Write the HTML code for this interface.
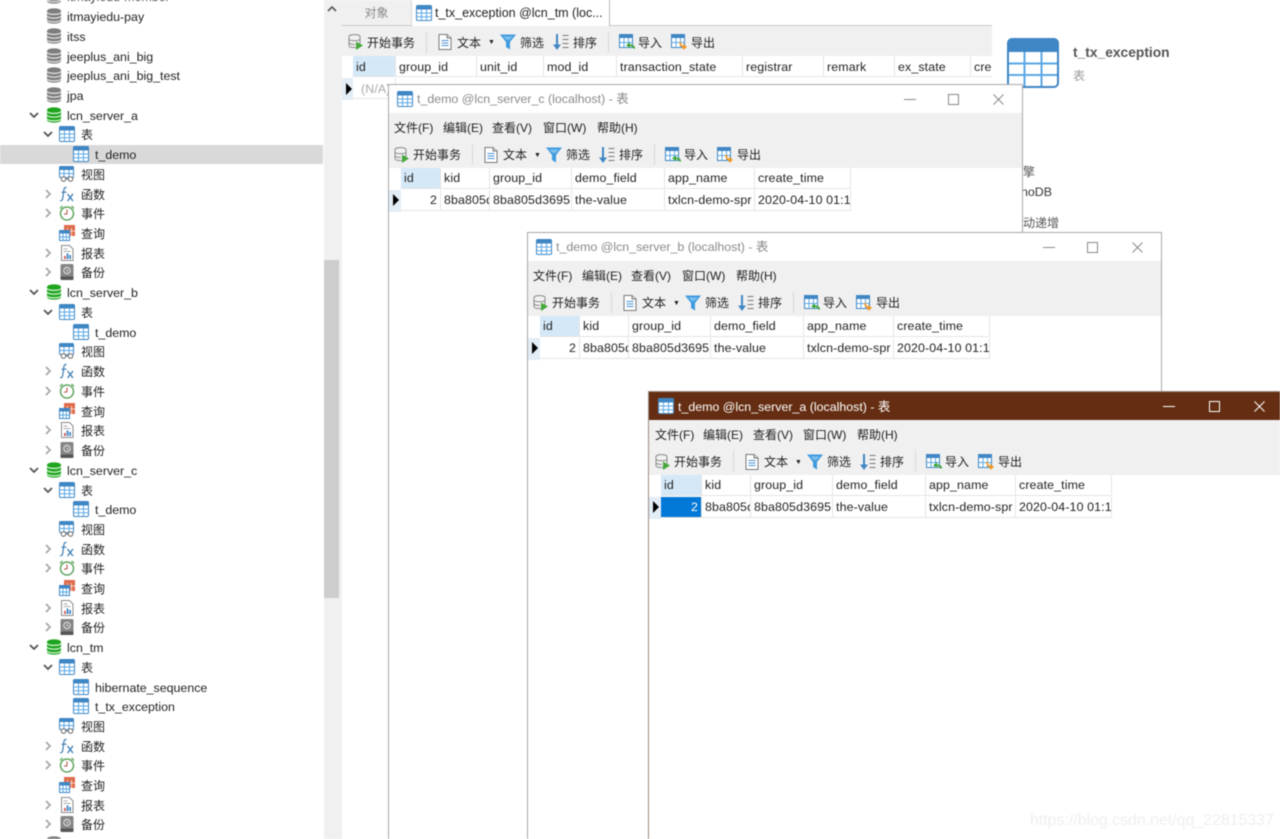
<!DOCTYPE html>
<html lang="zh"><head><meta charset="utf-8"><title>Navicat</title>
<style>
html,body{margin:0;padding:0;background:#fff}
body{width:1280px;height:839px;overflow:hidden;position:relative;font:12.4px/20px "Liberation Sans","Noto Sans CJK SC",sans-serif;color:#222}
#all{position:absolute;left:0;top:0;width:1280px;height:839px;overflow:hidden;filter:blur(.4px)}
svg{position:absolute;overflow:visible}
.a{position:absolute;white-space:nowrap}
.r{position:absolute;left:0;width:323px;height:20px}
.r span{position:absolute;top:1px;white-space:nowrap}
.r svg.i{width:16px;height:16px;top:2px}
.r svg.c{width:10px;height:10px;top:5px}
.l0 svg.i{left:46px}.l0 span{left:67px}.l0 svg.c{left:29px}
.l1 svg.i{left:59px}.l1 span{left:81px;font-size:12px}.l1 svg.c{left:43px}
.l2 svg.i{left:73px}.l2 span{left:95px}
.w{position:absolute;background:#fff;border:1px solid #a8a8a8;box-sizing:border-box;overflow:hidden}
.tt{position:absolute;left:0;right:0;top:0;height:28px;background:#fff;color:#8a8a8a}
.mn{position:absolute;left:0;right:0;top:28px;height:28px;background:#f0f0f0}
.tb{position:absolute;height:27px;background:#f0f0f0;color:#222}
.tb span{position:absolute;top:4px;white-space:nowrap;font-size:12px}
.tb svg{width:16px;height:16px;top:6px}
.tb i{position:absolute;top:3px;width:1px;height:21px;background:#d8d8d8}
.mn span{position:absolute;top:5px;white-space:nowrap;font-size:12px}
.g{position:absolute;left:0;height:44px;letter-spacing:.12px}
.g b{position:absolute;font-weight:400;height:21px;line-height:21px;box-sizing:border-box;padding-left:3px;background:#fff;border-right:1px solid #e4e4e4;border-bottom:1px solid #e4e4e4;overflow:hidden;white-space:nowrap}
#tg b{line-height:23px}
.g b.h{top:0}.g b.d{top:22px}
.g b.gu{background:#e3edf6;border:0;padding:0}
.tt span{position:absolute;top:4px;left:28px;white-space:nowrap}
</style></head><body><div id="all">
<svg width="0" height="0" style="position:absolute"><defs>
<symbol id="tbl" viewBox="0 0 16 16"><rect x=".5" y=".5" width="15" height="15" rx="1.2" fill="#fff" stroke="#3f86c4"/><rect x=".5" y=".5" width="15" height="4" fill="#3f86c4"/><path d="M5.5 4.5v11M10.5 4.5v11M.5 8h15M.5 11.700h15" stroke="#5aa8e6" fill="none"/></symbol>
<symbol id="gdb" viewBox="0 0 16 16"><path d="M1 3c0-3.500 14-3.500 14 0v10c0 3.500-14 3.500-14 0z" fill="#7d7d7d"/><path d="M1 4.500c2 2.500 12 2.500 14 0M1 8.300c2 2.500 12 2.500 14 0M1 12c2 2.500 12 2.500 14 0" stroke="#e4e4e4" stroke-width="1.200" fill="none"/></symbol>
<symbol id="ydb" viewBox="0 0 16 16"><path d="M1 3c0-3.500 14-3.500 14 0v10c0 3.500-14 3.500-14 0z" fill="#1ea51e"/><path d="M1 4.500c2 2.500 12 2.500 14 0M1 8.300c2 2.500 12 2.500 14 0M1 12c2 2.500 12 2.500 14 0" stroke="#d8f2d8" stroke-width="1.200" fill="none"/></symbol>
<symbol id="cd" viewBox="0 0 10 10"><path d="M1 3l4 4 4-4" fill="none" stroke="#555" stroke-width="1.800"/></symbol>
<symbol id="cr" viewBox="0 0 10 10"><path d="M3 1l4 4-4 4" fill="none" stroke="#a6a6a6" stroke-width="1.700"/></symbol>
<symbol id="view" viewBox="0 0 16 16"><rect x=".5" y=".5" width="14" height="11" rx="1" fill="#fff" stroke="#3f86c4"/><rect x=".5" y=".5" width="14" height="3.500" fill="#3f86c4"/><path d="M5 4v7M10 4v7M.5 7.500h14" stroke="#5aa8e6" fill="none"/><circle cx="4.500" cy="13" r="2.300" fill="#fff" stroke="#666"/><circle cx="11.500" cy="13" r="2.300" fill="#fff" stroke="#666"/><path d="M6.800 13h2.400" stroke="#666"/></symbol>
<symbol id="fx" viewBox="0 0 16 16"><path d="M7.500 1.500C5.500 1 5 2.500 4.700 5L3.800 12c-.3 2-1 3-2.800 2.600M2.500 6.200h5" fill="none" stroke="#3f7fb5" stroke-width="1.200"/><path d="M8.500 8l5.500 7M14 8l-5.500 7" stroke="#3f7fb5" stroke-width="1.400"/></symbol>
<symbol id="clk" viewBox="0 0 16 16"><circle cx="8" cy="8.500" r="6.500" fill="#fff" stroke="#5fa55f" stroke-width="1.500"/><path d="M8 4.500v4.200l-3 .6" fill="none" stroke="#b04a3a"/><path d="M1 3.500L3.500 1M15 3.500L12.500 1" stroke="#5fa55f" stroke-width="1.400"/></symbol>
<symbol id="qry" viewBox="0 0 16 16"><rect x="5" y="0" width="11" height="11" fill="#de6b4b"/><path d="M8.500 3v8M12.500 3v8M5 6h11" stroke="#f7cfc3" fill="none"/><rect x=".5" y="5.500" width="10" height="10" fill="#fff" stroke="#3f86c4"/><rect x=".5" y="5.500" width="10" height="3" fill="#3f86c4"/><path d="M4 8.500v7M7.300 8.500v7M.5 12h10" stroke="#5aa8e6" fill="none"/></symbol>
<symbol id="rep" viewBox="0 0 16 16"><path d="M2.500.5h8l3.500 3.500v11.500h-11.500z" fill="#fff" stroke="#8a8a8a"/><path d="M4.500 4h4M4.500 6.500h7" stroke="#aaa"/><rect x="5" y="11" width="1.800" height="3" fill="#d9534f"/><rect x="7.600" y="8.500" width="1.800" height="5.500" fill="#3f86c4"/><rect x="10.200" y="10" width="1.800" height="4" fill="#3f86c4"/></symbol>
<symbol id="bak" viewBox="0 0 16 16"><rect x="1.500" y="0" width="13" height="16" rx="1.500" fill="#858585"/><rect x="1.500" y="12.500" width="13" height="3.500" rx="1" fill="#555"/><circle cx="8" cy="6.500" r="3.200" fill="none" stroke="#e4e4e4"/><path d="M8 4.800v2l1.400.6" fill="none" stroke="#e4e4e4" stroke-width=".8"/></symbol>
<symbol id="begin" viewBox="0 0 16 16"><path d="M1 2.500c0-2.500 11-2.500 11 0v9c0 1.500-4 2-6 2-3 0-5-.7-5-2z" fill="#f2f2f2" stroke="#8a8a8a"/><path d="M1 5.500c2 1.600 9 1.600 11 0M1 9c2 1.600 5 1.600 6 1.200" fill="none" stroke="#8a8a8a"/><path d="M8 7.500l7 4-7 4.500z" fill="#46a83c"/></symbol>
<symbol id="doc" viewBox="0 0 16 16"><path d="M2 .5h8l4 3.500v11.500h-12z" fill="#fff" stroke="#777"/><path d="M10 .5v3.500h4" fill="#ddd" stroke="#777"/><path d="M4.500 6.500h7M4.500 9h7M4.500 11.500h7" stroke="#4a90d0"/></symbol>
<symbol id="fil" viewBox="0 0 16 16"><path d="M0 .5h16L10 8v7.500L6 13V8z" fill="#3f9ade"/><path d="M3 2.500h10L9 6H7z" fill="#7cc0ee"/></symbol>
<symbol id="srt" viewBox="0 0 16 16"><path d="M4 0v12" stroke="#3f86c4" stroke-width="2"/><path d="M0 10.500h8L4 16z" fill="#3f86c4"/><path d="M9.500 1.500h6M9.500 5.500h6M9.500 9.500h6M9.500 13.500h6" stroke="#777" stroke-width="1.100"/></symbol>
<symbol id="imp" viewBox="0 0 16 16"><rect x=".5" y=".5" width="13" height="13" fill="#fff" stroke="#3f86c4"/><rect x=".5" y=".5" width="13" height="3.500" fill="#3f86c4"/><path d="M5 4v9.500M9.500 4v9.500M.5 8.500h13" stroke="#5aa8e6"/><path d="M15.500 14.500c-1-3-3-3.500-5.500-3.200" fill="none" stroke="#3fa535" stroke-width="1.800"/><path d="M7 11.300l4-2.800v5.500z" fill="#3fa535"/></symbol>
<symbol id="exp" viewBox="0 0 16 16"><rect x=".5" y=".5" width="13" height="13" fill="#fff" stroke="#3f86c4"/><rect x=".5" y=".5" width="13" height="3.500" fill="#3f86c4"/><path d="M5 4v9.500M9.500 4v9.500M.5 8.500h13" stroke="#5aa8e6"/><path d="M9 8c.5 3.500 1.500 5 4 5" fill="none" stroke="#f0951e" stroke-width="1.800"/><path d="M12 9.800l4 3.200-4 3z" fill="#f0951e"/></symbol>
<symbol id="tri" viewBox="0 0 8 12"><path d="M1 0l6 6-6 6z" fill="#000"/></symbol>
</defs></svg>

<!-- tree -->
<div class="a" style="left:0;top:145px;width:323px;height:19px;background:#d9d9d9"></div>
<div class="r l0" style="top:-14px"><svg class="i"><use href="#gdb"/></svg><span>itmayiedu-member</span></div>
<div class="r l0" style="top:6px"><svg class="i"><use href="#gdb"/></svg><span>itmayiedu-pay</span></div>
<div class="r l0" style="top:26px"><svg class="i"><use href="#gdb"/></svg><span>itss</span></div>
<div class="r l0" style="top:46px"><svg class="i"><use href="#gdb"/></svg><span>jeeplus_ani_big</span></div>
<div class="r l0" style="top:65px"><svg class="i"><use href="#gdb"/></svg><span>jeeplus_ani_big_test</span></div>
<div class="r l0" style="top:85px"><svg class="i"><use href="#gdb"/></svg><span>jpa</span></div>

<div class="r l0" style="top:105px"><svg class="c"><use href="#cd"/></svg><svg class="i"><use href="#ydb"/></svg><span>lcn_server_a</span></div>
<div class="r l1" style="top:124px"><svg class="c"><use href="#cd"/></svg><svg class="i"><use href="#tbl"/></svg><span>表</span></div>
<div class="r l2" style="top:144px"><svg class="i"><use href="#tbl"/></svg><span>t_demo</span></div>
<div class="r l1" style="top:164px"><svg class="i"><use href="#view"/></svg><span>视图</span></div>
<div class="r l1" style="top:184px"><svg class="c"><use href="#cr"/></svg><svg class="i"><use href="#fx"/></svg><span>函数</span></div>
<div class="r l1" style="top:203px"><svg class="c"><use href="#cr"/></svg><svg class="i"><use href="#clk"/></svg><span>事件</span></div>
<div class="r l1" style="top:223px"><svg class="i"><use href="#qry"/></svg><span>查询</span></div>
<div class="r l1" style="top:243px"><svg class="c"><use href="#cr"/></svg><svg class="i"><use href="#rep"/></svg><span>报表</span></div>
<div class="r l1" style="top:262px"><svg class="c"><use href="#cr"/></svg><svg class="i"><use href="#bak"/></svg><span>备份</span></div>

<div class="r l0" style="top:282px"><svg class="c"><use href="#cd"/></svg><svg class="i"><use href="#ydb"/></svg><span>lcn_server_b</span></div>
<div class="r l1" style="top:302px"><svg class="c"><use href="#cd"/></svg><svg class="i"><use href="#tbl"/></svg><span>表</span></div>
<div class="r l2" style="top:322px"><svg class="i"><use href="#tbl"/></svg><span>t_demo</span></div>
<div class="r l1" style="top:341px"><svg class="i"><use href="#view"/></svg><span>视图</span></div>
<div class="r l1" style="top:361px"><svg class="c"><use href="#cr"/></svg><svg class="i"><use href="#fx"/></svg><span>函数</span></div>
<div class="r l1" style="top:381px"><svg class="c"><use href="#cr"/></svg><svg class="i"><use href="#clk"/></svg><span>事件</span></div>
<div class="r l1" style="top:401px"><svg class="i"><use href="#qry"/></svg><span>查询</span></div>
<div class="r l1" style="top:420px"><svg class="c"><use href="#cr"/></svg><svg class="i"><use href="#rep"/></svg><span>报表</span></div>
<div class="r l1" style="top:440px"><svg class="c"><use href="#cr"/></svg><svg class="i"><use href="#bak"/></svg><span>备份</span></div>

<div class="r l0" style="top:460px"><svg class="c"><use href="#cd"/></svg><svg class="i"><use href="#ydb"/></svg><span>lcn_server_c</span></div>
<div class="r l1" style="top:480px"><svg class="c"><use href="#cd"/></svg><svg class="i"><use href="#tbl"/></svg><span>表</span></div>
<div class="r l2" style="top:499px"><svg class="i"><use href="#tbl"/></svg><span>t_demo</span></div>
<div class="r l1" style="top:519px"><svg class="i"><use href="#view"/></svg><span>视图</span></div>
<div class="r l1" style="top:539px"><svg class="c"><use href="#cr"/></svg><svg class="i"><use href="#fx"/></svg><span>函数</span></div>
<div class="r l1" style="top:558px"><svg class="c"><use href="#cr"/></svg><svg class="i"><use href="#clk"/></svg><span>事件</span></div>
<div class="r l1" style="top:578px"><svg class="i"><use href="#qry"/></svg><span>查询</span></div>
<div class="r l1" style="top:598px"><svg class="c"><use href="#cr"/></svg><svg class="i"><use href="#rep"/></svg><span>报表</span></div>
<div class="r l1" style="top:617px"><svg class="c"><use href="#cr"/></svg><svg class="i"><use href="#bak"/></svg><span>备份</span></div>

<div class="r l0" style="top:637px"><svg class="c"><use href="#cd"/></svg><svg class="i"><use href="#ydb"/></svg><span>lcn_tm</span></div>
<div class="r l1" style="top:657px"><svg class="c"><use href="#cd"/></svg><svg class="i"><use href="#tbl"/></svg><span>表</span></div>
<div class="r l2" style="top:677px"><svg class="i"><use href="#tbl"/></svg><span>hibernate_sequence</span></div>
<div class="r l2" style="top:696px"><svg class="i"><use href="#tbl"/></svg><span>t_tx_exception</span></div>
<div class="r l1" style="top:716px"><svg class="i"><use href="#view"/></svg><span>视图</span></div>
<div class="r l1" style="top:736px"><svg class="c"><use href="#cr"/></svg><svg class="i"><use href="#fx"/></svg><span>函数</span></div>
<div class="r l1" style="top:755px"><svg class="c"><use href="#cr"/></svg><svg class="i"><use href="#clk"/></svg><span>事件</span></div>
<div class="r l1" style="top:775px"><svg class="i"><use href="#qry"/></svg><span>查询</span></div>
<div class="r l1" style="top:795px"><svg class="c"><use href="#cr"/></svg><svg class="i"><use href="#rep"/></svg><span>报表</span></div>
<div class="r l1" style="top:814px"><svg class="c"><use href="#cr"/></svg><svg class="i"><use href="#bak"/></svg><span>备份</span></div>
<div class="r l0" style="top:834px"><svg class="i"><use href="#gdb"/></svg></div>

<!-- scrollbar -->
<div class="a" style="left:324px;top:0;width:18px;height:839px;background:#f0f0f0"></div>
<div class="a" style="left:324px;top:260px;width:15px;height:338px;background:#cdcdcd"></div>
<svg style="left:327px;top:5px;width:10px;height:8px" viewBox="0 0 10 8"><path d="M1 6l4-4 4 4" fill="none" stroke="#555" stroke-width="1.600"/></svg>

<!-- back panel -->
<div class="a" style="left:342px;top:0;width:69px;height:25px;background:#f0f0f0;border-right:1px solid #d8d8d8;line-height:26px;text-align:center;color:#8a8a8a;font-size:12px">对象</div>
<div class="a" style="left:412px;top:0;width:197px;height:26px;background:#fff;border-right:1px solid #bbb;line-height:26px;font-size:12.500px"><svg style="left:4px;top:5px;width:16px;height:16px"><use href="#tbl"/></svg><span style="position:absolute;left:23px">t_tx_exception @lcn_tm (loc...</span></div>
<div class="a" style="left:342px;top:25px;width:70px;height:1px;background:#c8c8c8"></div>
<div class="a" style="left:610px;top:25px;width:382px;height:1px;background:#c8c8c8"></div>
<div class="tb" style="left:342px;top:26px;width:650px;height:30px">
<svg style="left:6px;top:8px"><use href="#begin"/></svg><span style="left:25px;top:7px">开始事务</span><i style="left:84px;top:6px"></i>
<svg style="left:95px;top:8px"><use href="#doc"/></svg><span style="left:115px;top:7px">文本</span><span style="left:146px;top:7px;font-size:7px">▼</span>
<svg style="left:158px;top:8px"><use href="#fil"/></svg><span style="left:178px;top:7px">筛选</span>
<svg style="left:211px;top:8px"><use href="#srt"/></svg><span style="left:231px;top:7px">排序</span><i style="left:266px;top:6px"></i>
<svg style="left:277px;top:8px"><use href="#imp"/></svg><span style="left:296px;top:7px">导入</span>
<svg style="left:329px;top:8px"><use href="#exp"/></svg><span style="left:349px;top:7px">导出</span></div>
<div class="g" id="tg" style="left:342px;top:56px;width:650px;height:44px">
<b class="h" style="left:11px;width:43px;background:#d5e8f7">id</b><b class="h" style="left:54px;width:81px">group_id</b><b class="h" style="left:135px;width:67px">unit_id</b><b class="h" style="left:202px;width:73px">mod_id</b><b class="h" style="left:275px;width:126px">transaction_state</b><b class="h" style="left:401px;width:81px">registrar</b><b class="h" style="left:482px;width:71px">remark</b><b class="h" style="left:553px;width:76px">ex_state</b><b class="h" style="left:629px;width:21px;border-right:0">cre</b>
<b class="d gu" style="left:0;width:11px;height:22px"></b><svg style="left:3px;top:27px;width:8px;height:12px"><use href="#tri"/></svg><b class="d" style="left:11px;width:43px;color:#aaa;padding-left:8px">(N/A)</b>
</div>

<!-- right info -->
<svg style="left:1007px;top:38px;width:52px;height:50px" viewBox="0 0 52 50"><rect x="1" y="1" width="50" height="48" rx="4" fill="#fff" stroke="#3f86c4" stroke-width="2"/><path d="M1 5a4 4 0 0 1 4-4h42a4 4 0 0 1 4 4v9H1z" fill="#3f86c4"/><path d="M17.500 14v34M34.500 14v34M2 25.500h48M2 37h48" stroke="#5aa8e6" stroke-width="2" fill="none"/></svg>
<div class="a" style="left:1073px;top:43px;font-weight:700;font-size:13.800px;color:#555">t_tx_exception</div>
<div class="a" style="left:1073px;top:66px;color:#999;font-size:12px">表</div>
<div class="a" style="left:1023px;top:162px;color:#555;font-size:12px">擎</div>
<div class="a" style="left:1021px;top:182px;color:#333">noDB</div>
<div class="a" style="left:1023px;top:213px;color:#555;font-size:12px">动递增</div>

<!-- window c -->
<div class="w" style="left:388px;top:84px;width:635px;height:780px">
<div class="tt"><svg style="left:8px;top:6px;width:16px;height:16px"><use href="#tbl"/></svg><span>t_demo @lcn_server_c (localhost) - 表</span>
<svg style="left:515px;top:14px;width:12px;height:1px" viewBox="0 0 12 1"><path d="M0 .5h12" stroke="#888"/></svg><svg style="left:559px;top:9px;width:11px;height:11px" viewBox="0 0 11 11"><rect x=".5" y=".5" width="10" height="10" fill="none" stroke="#888"/></svg><svg style="left:604px;top:9px;width:11px;height:11px" viewBox="0 0 11 11"><path d="M.5.5l10 10M10.500.5l-10 10" stroke="#888"/></svg></div>
<div class="mn"><span style="left:5px">文件(F)</span><span style="left:54px">编辑(E)</span><span style="left:103px">查看(V)</span><span style="left:154px">窗口(W)</span><span style="left:208px">帮助(H)</span></div>
<div class="tb" style="left:0;right:0;top:56px">
<svg style="left:5px"><use href="#begin"/></svg><span style="left:24px">开始事务</span><i style="left:83px"></i>
<svg style="left:94px"><use href="#doc"/></svg><span style="left:114px">文本</span><span style="left:145px;top:5px;font-size:7px">▼</span>
<svg style="left:157px"><use href="#fil"/></svg><span style="left:177px">筛选</span>
<svg style="left:210px"><use href="#srt"/></svg><span style="left:230px">排序</span><i style="left:265px"></i>
<svg style="left:276px"><use href="#imp"/></svg><span style="left:295px">导入</span>
<svg style="left:328px"><use href="#exp"/></svg><span style="left:348px">导出</span></div>
<div class="g" style="top:83px;width:470px">
<b class="h" style="left:12px;width:40px;background:#d5e8f7">id</b><b class="h" style="left:52px;width:49px">kid</b><b class="h" style="left:101px;width:82px">group_id</b><b class="h" style="left:183px;width:93px">demo_field</b><b class="h" style="left:276px;width:90px">app_name</b><b class="h" style="left:366px;width:96px">create_time</b>
<b class="d gu" style="left:0;width:12px;height:22px"></b><svg style="left:3px;top:26px;width:8px;height:12px"><use href="#tri"/></svg>
<b class="d" style="left:12px;width:40px;text-align:right;padding-right:3px">2</b><b class="d" style="left:52px;width:49px">8ba805d3695</b><b class="d" style="left:101px;width:82px">8ba805d3695</b><b class="d" style="left:183px;width:93px">the-value</b><b class="d" style="left:276px;width:90px">txlcn-demo-spr</b><b class="d" style="left:366px;width:96px">2020-04-10 01:10</b></div>
</div>

<!-- window b -->
<div class="w" style="left:527px;top:232px;width:635px;height:640px">
<div class="tt"><svg style="left:8px;top:6px;width:16px;height:16px"><use href="#tbl"/></svg><span>t_demo @lcn_server_b (localhost) - 表</span>
<svg style="left:515px;top:14px;width:12px;height:1px" viewBox="0 0 12 1"><path d="M0 .5h12" stroke="#888"/></svg><svg style="left:559px;top:9px;width:11px;height:11px" viewBox="0 0 11 11"><rect x=".5" y=".5" width="10" height="10" fill="none" stroke="#888"/></svg><svg style="left:604px;top:9px;width:11px;height:11px" viewBox="0 0 11 11"><path d="M.5.5l10 10M10.500.5l-10 10" stroke="#888"/></svg></div>
<div class="mn"><span style="left:5px">文件(F)</span><span style="left:54px">编辑(E)</span><span style="left:103px">查看(V)</span><span style="left:154px">窗口(W)</span><span style="left:208px">帮助(H)</span></div>
<div class="tb" style="left:0;right:0;top:56px">
<svg style="left:5px"><use href="#begin"/></svg><span style="left:24px">开始事务</span><i style="left:83px"></i>
<svg style="left:94px"><use href="#doc"/></svg><span style="left:114px">文本</span><span style="left:145px;top:5px;font-size:7px">▼</span>
<svg style="left:157px"><use href="#fil"/></svg><span style="left:177px">筛选</span>
<svg style="left:210px"><use href="#srt"/></svg><span style="left:230px">排序</span><i style="left:265px"></i>
<svg style="left:276px"><use href="#imp"/></svg><span style="left:295px">导入</span>
<svg style="left:328px"><use href="#exp"/></svg><span style="left:348px">导出</span></div>
<div class="g" style="top:83px;width:470px">
<b class="h" style="left:12px;width:40px;background:#d5e8f7">id</b><b class="h" style="left:52px;width:49px">kid</b><b class="h" style="left:101px;width:82px">group_id</b><b class="h" style="left:183px;width:93px">demo_field</b><b class="h" style="left:276px;width:90px">app_name</b><b class="h" style="left:366px;width:96px">create_time</b>
<b class="d gu" style="left:0;width:12px;height:22px"></b><svg style="left:3px;top:26px;width:8px;height:12px"><use href="#tri"/></svg>
<b class="d" style="left:12px;width:40px;text-align:right;padding-right:3px">2</b><b class="d" style="left:52px;width:49px">8ba805d3695</b><b class="d" style="left:101px;width:82px">8ba805d3695</b><b class="d" style="left:183px;width:93px">the-value</b><b class="d" style="left:276px;width:90px">txlcn-demo-spr</b><b class="d" style="left:366px;width:96px">2020-04-10 01:10</b></div>
</div>

<!-- window a -->
<div class="w" style="left:648px;top:391px;width:640px;height:480px;border-color:#9a8a80">
<div class="tt" style="background:#652e12;color:#fff;height:28px"><svg style="left:9px;top:6px;width:16px;height:16px"><use href="#tbl"/></svg><span style="left:29px;top:5px">t_demo @lcn_server_a (localhost) - 表</span>
<svg style="left:514px;top:14px;width:12px;height:1px" viewBox="0 0 12 1"><path d="M0 .5h12" stroke="#fff"/></svg><svg style="left:560px;top:9px;width:11px;height:11px" viewBox="0 0 11 11"><rect x=".5" y=".5" width="10" height="10" fill="none" stroke="#fff"/></svg><svg style="left:605px;top:9px;width:11px;height:11px" viewBox="0 0 11 11"><path d="M.5.5l10 10M10.500.5l-10 10" stroke="#fff"/></svg></div>
<div class="mn"><span style="left:6px">文件(F)</span><span style="left:54px">编辑(E)</span><span style="left:104px">查看(V)</span><span style="left:154px">窗口(W)</span><span style="left:208px">帮助(H)</span></div>
<div class="tb" style="left:0;right:0;top:56px">
<svg style="left:6px"><use href="#begin"/></svg><span style="left:25px">开始事务</span><i style="left:84px"></i>
<svg style="left:95px"><use href="#doc"/></svg><span style="left:115px">文本</span><span style="left:146px;top:5px;font-size:7px">▼</span>
<svg style="left:158px"><use href="#fil"/></svg><span style="left:178px">筛选</span>
<svg style="left:211px"><use href="#srt"/></svg><span style="left:231px">排序</span><i style="left:266px"></i>
<svg style="left:277px"><use href="#imp"/></svg><span style="left:296px">导入</span>
<svg style="left:329px"><use href="#exp"/></svg><span style="left:349px">导出</span></div>
<div class="g" style="top:83px;width:470px">
<b class="h" style="left:12px;width:41px;background:#d5e8f7">id</b><b class="h" style="left:53px;width:49px">kid</b><b class="h" style="left:102px;width:82px">group_id</b><b class="h" style="left:184px;width:93px">demo_field</b><b class="h" style="left:277px;width:90px">app_name</b><b class="h" style="left:367px;width:96px">create_time</b>
<b class="d gu" style="left:0;width:12px;height:22px"></b><svg style="left:3px;top:26px;width:8px;height:12px"><use href="#tri"/></svg>
<b class="d" style="left:12px;width:41px;text-align:right;padding-right:3px;background:#0078d7;color:#fff">2</b><b class="d" style="left:53px;width:49px">8ba805d3695</b><b class="d" style="left:102px;width:82px">8ba805d3695</b><b class="d" style="left:184px;width:93px">the-value</b><b class="d" style="left:277px;width:90px">txlcn-demo-spr</b><b class="d" style="left:367px;width:96px">2020-04-10 01:10</b></div>
</div>

<div class="a" style="left:1030px;top:811px;font:15.900px/20px 'Liberation Sans',sans-serif;color:#efefef">https://blog.csdn.net/qq_22815337</div>
</div></body></html>
